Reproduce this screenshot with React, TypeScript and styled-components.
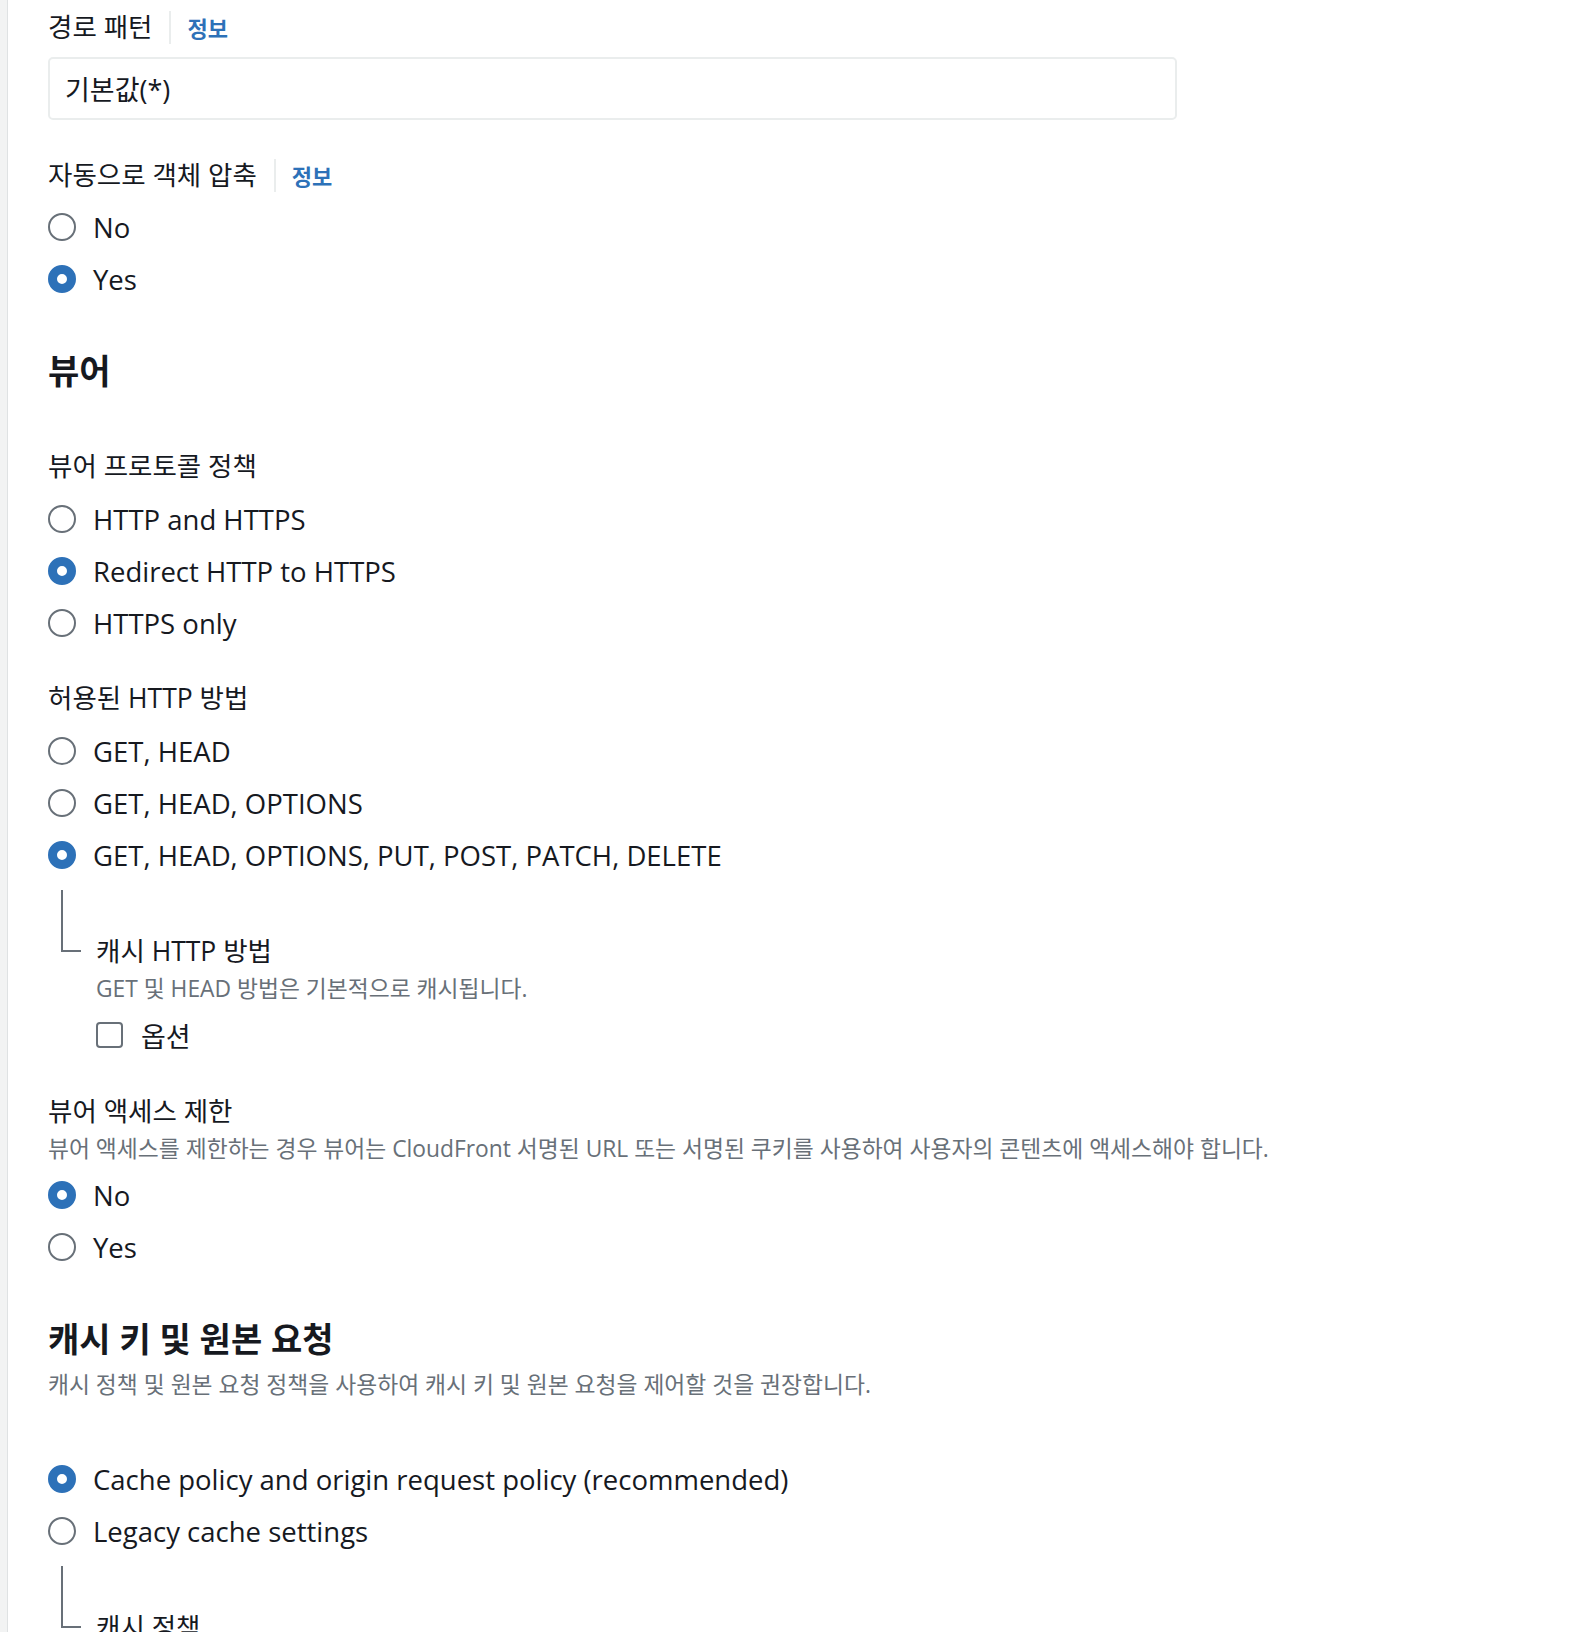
import React from 'react';
import styled, { createGlobalStyle } from 'styled-components';

const GlobalStyle = createGlobalStyle`
  html, body {
    margin: 0;
    padding: 0;
    background: #ffffff;
  }
  body {
    font-family: "Open Sans", "Noto Sans CJK KR", sans-serif;
    color: #16191f;
    -webkit-font-smoothing: antialiased;
  }
`;

const BLUE = '#2d71b8';
const GREY_TEXT = '#687078';

const Page = styled.div`
  display: flex;
  min-height: 1632px;
  overflow: hidden;
`;

const Rail = styled.div`
  flex: 0 0 7px;
  background: #f2f3f3;
  border-right: 1px solid #dfe2e3;
`;

const Content = styled.main`
  flex: 1;
  padding: 7px 0 0 40px;
  display: flex;
  flex-direction: column;
`;

const LabelRow = styled.div<{ $gap?: number }>`
  display: flex;
  align-items: center;
  height: 40px;
  margin-top: ${(p) => p.$gap ?? 0}px;
`;

const Label = styled.span`
  font-size: 26.5px;
  line-height: 40px;
  color: #16191f;
`;

const InfoDivider = styled.span`
  width: 2px;
  height: 33px;
  background: #eaeded;
  margin: 0 16px 0 17px;
`;

const InfoLink = styled.a`
  font-size: 22px;
  font-weight: 700;
  color: ${BLUE};
  text-decoration: none;
`;

const Input = styled.div`
  box-sizing: border-box;
  margin-top: 10px;
  width: 1129px;
  height: 63px;
  border: 2px solid #eaeded;
  border-radius: 5px;
  padding-left: 15px;
  display: flex;
  align-items: center;
  font-size: 27px;
`;

const RadioGroup = styled.div<{ $gap?: number }>`
  display: flex;
  flex-direction: column;
  margin-top: ${(p) => p.$gap ?? 6}px;
`;

const RadioRow = styled.label`
  display: flex;
  align-items: center;
  height: 52px;
  gap: 17px;
  font-size: 27.5px;
`;

const RadioDot = styled.span<{ $checked?: boolean }>`
  box-sizing: border-box;
  flex: 0 0 28px;
  width: 28px;
  height: 28px;
  border-radius: 50%;
  background: #ffffff;
  border: ${(p) => (p.$checked ? `9px solid ${BLUE}` : `2px solid ${GREY_TEXT}`)};
`;

const Heading = styled.h2<{ $gap: number }>`
  margin: ${(p) => p.$gap}px 0 0;
  font-size: 34px;
  line-height: 48px;
  font-weight: 700;
  color: #16191f;
`;

const Description = styled.div<{ $gap?: number }>`
  margin-top: ${(p) => p.$gap ?? 0}px;
  font-size: 22.8px;
  line-height: 36px;
  color: ${GREY_TEXT};
`;

const Nested = styled.div`
  display: flex;
  flex-direction: column;
  margin-top: 9px;
`;

const Elbow = styled.span`
  box-sizing: border-box;
  display: block;
  margin-left: 13px;
  width: 20px;
  height: 62px;
  border-left: 2px solid ${GREY_TEXT};
  border-bottom: 2px solid ${GREY_TEXT};
`;

const NestedBody = styled.div`
  margin-top: -21px;
  padding-left: 48px;
  display: flex;
  flex-direction: column;
`;

const CheckRow = styled.label`
  display: flex;
  align-items: center;
  height: 44px;
  margin-top: 6px;
  gap: 18px;
  font-size: 27px;
`;

const CheckBox = styled.span`
  box-sizing: border-box;
  width: 27px;
  height: 26px;
  border: 2px solid ${GREY_TEXT};
  border-radius: 4px;
  background: #ffffff;
`;

type Option = { label: string; checked?: boolean };

function Radios({ options, gap }: { options: Option[]; gap?: number }) {
  return (
    <RadioGroup $gap={gap}>
      {options.map((o) => (
        <RadioRow key={o.label}>
          <RadioDot $checked={o.checked} />
          <span>{o.label}</span>
        </RadioRow>
      ))}
    </RadioGroup>
  );
}

function FieldLabel({ text, info, gap }: { text: string; info?: boolean; gap?: number }) {
  return (
    <LabelRow $gap={gap}>
      <Label>{text}</Label>
      {info && (
        <>
          <InfoDivider />
          <InfoLink href="#">정보</InfoLink>
        </>
      )}
    </LabelRow>
  );
}

export default function App() {
  return (
    <Page>
      <GlobalStyle />
      <Rail />
      <Content>
        <FieldLabel text="경로 패턴" info />
        <Input>기본값(*)</Input>

        <FieldLabel text="자동으로 객체 압축" info gap={35} />
        <Radios options={[{ label: 'No' }, { label: 'Yes', checked: true }]} />

        <Heading $gap={42}>뷰어</Heading>

        <FieldLabel text="뷰어 프로토콜 정책" gap={51} />
        <Radios
          gap={7}
          options={[
            { label: 'HTTP and HTTPS' },
            { label: 'Redirect HTTP to HTTPS', checked: true },
            { label: 'HTTPS only' },
          ]}
        />

        <FieldLabel text="허용된 HTTP 방법" gap={29} />
        <Radios
          gap={7}
          options={[
            { label: 'GET, HEAD' },
            { label: 'GET, HEAD, OPTIONS' },
            { label: 'GET, HEAD, OPTIONS, PUT, POST, PATCH, DELETE', checked: true },
          ]}
        />
        <Nested>
          <Elbow />
          <NestedBody>
            <Label>캐시 HTTP 방법</Label>
            <Description>GET 및 HEAD 방법은 기본적으로 캐시됩니다.</Description>
            <CheckRow>
              <CheckBox />
              <span>옵션</span>
            </CheckRow>
          </NestedBody>
        </Nested>

        <FieldLabel text="뷰어 액세스 제한" gap={34} />
        <Description>
          뷰어 액세스를 제한하는 경우 뷰어는 CloudFront 서명된 URL 또는 서명된 쿠키를 사용하여 사용자의 콘텐츠에 액세스해야 합니다.
        </Description>
        <Radios gap={2} options={[{ label: 'No', checked: true }, { label: 'Yes' }]} />

        <Heading $gap={42}>캐시 키 및 원본 요청</Heading>
        <Description $gap={4}>
          캐시 정책 및 원본 요청 정책을 사용하여 캐시 키 및 원본 요청을 제어할 것을 권장합니다.
        </Description>
        <Radios
          gap={50}
          options={[
            { label: 'Cache policy and origin request policy (recommended)', checked: true },
            { label: 'Legacy cache settings' },
          ]}
        />
        <Nested>
          <Elbow />
          <NestedBody>
            <Label>캐시 정책</Label>
          </NestedBody>
        </Nested>
      </Content>
    </Page>
  );
}
